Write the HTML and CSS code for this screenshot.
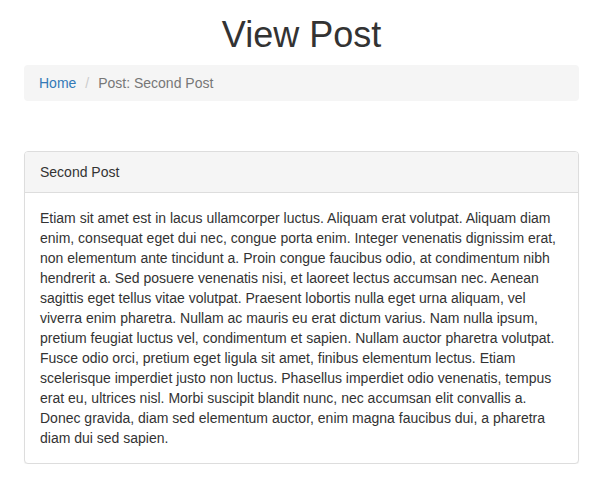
FILE: index.html
```html
<!DOCTYPE html>
<html>
<head>
<meta charset="utf-8">
<title>View Post</title>
<link rel="stylesheet" href="styles.css">
</head>
<body>
<div class="container">
  <h1 class="page-title">View Post</h1>
  <ol class="breadcrumb">
    <li><a href="#">Home</a></li>
    <li class="active">Post: Second Post</li>
  </ol>
  <div class="panel">
    <div class="panel-heading">Second Post</div>
    <div class="panel-body">Etiam sit amet est in lacus ullamcorper luctus. Aliquam erat volutpat. Aliquam diam enim, consequat eget dui nec, congue porta enim. Integer venenatis dignissim erat, non elementum ante tincidunt a. Proin congue faucibus odio, at condimentum nibh hendrerit a. Sed posuere venenatis nisi, et laoreet lectus accumsan nec. Aenean sagittis eget tellus vitae volutpat. Praesent lobortis nulla eget urna aliquam, vel viverra enim pharetra. Nullam ac mauris eu erat dictum varius. Nam nulla ipsum, pretium feugiat luctus vel, condimentum et sapien. Nullam auctor pharetra volutpat. Fusce odio orci, pretium eget ligula sit amet, finibus elementum lectus. Etiam scelerisque imperdiet justo non luctus. Phasellus imperdiet odio venenatis, tempus erat eu, ultrices nisl. Morbi suscipit blandit nunc, nec accumsan elit convallis a. Donec gravida, diam sed elementum auctor, enim magna faucibus dui, a pharetra diam dui sed sapien.</div>
  </div>
</div>
</body>
</html>
```

FILE: styles.css
```css
* { box-sizing: border-box; }
html, body { margin: 0; padding: 0; }
body {
  font-family: "Liberation Sans", Arial, Helvetica, sans-serif;
  font-size: 14px;
  line-height: 20px;
  color: #333;
  background: #fff;
}
.container {
  padding: 0 16px 0 24px;
}
.page-title {
  margin: 15px 0 10px;
  font-size: 36px;
  line-height: 40px;
  font-weight: 500;
  text-align: center;
  color: #333;
}
.breadcrumb {
  display: flex;
  list-style: none;
  margin: 0 0 20px;
  padding: 8px 15px;
  background: #f5f5f5;
  border-radius: 4px;
}
.breadcrumb li + li { margin-left: 4px; }
.breadcrumb li + li::before {
  content: "/\00a0";
  color: #ccc;
  padding: 0 5px;
}
.breadcrumb a {
  color: #337ab7;
  text-decoration: none;
}
.breadcrumb .active { color: #777; }
.panel {
  margin-top: 50px;
  border: 1px solid #ddd;
  border-radius: 4px;
  box-shadow: 0 1px 1px rgba(0,0,0,.05);
  background: #fff;
}
.panel-heading {
  padding: 10px 15px;
  background: #f5f5f5;
  border-bottom: 1px solid #ddd;
  border-radius: 3px 3px 0 0;
}
.panel-body {
  padding: 15px;
}
```
